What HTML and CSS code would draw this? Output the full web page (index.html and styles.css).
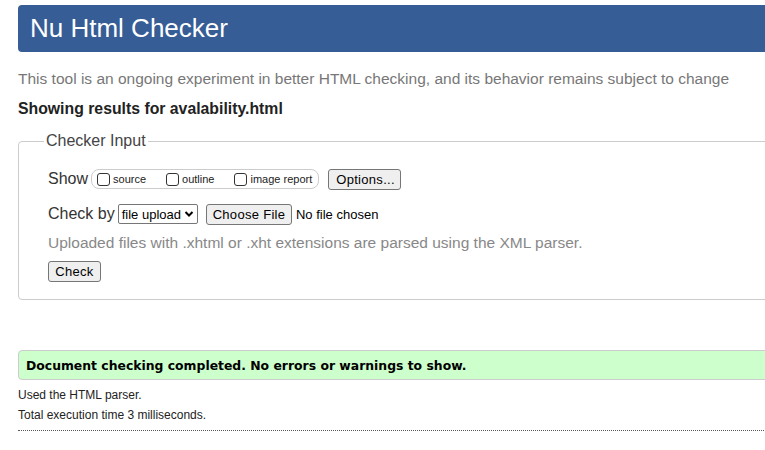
FILE: index.html
```html
<!DOCTYPE html>
<html lang="en">
<head>
<meta charset="utf-8">
<title>Nu Html Checker</title>
<link rel="stylesheet" href="styles.css">
</head>
<body>
<div class="page">
  <h1 class="banner">Nu Html Checker</h1>
  <p class="intro">This tool is an ongoing experiment in better HTML checking, and its behavior remains subject to change</p>
  <p class="results">Showing results for avalability.html</p>
  <fieldset class="input">
    <legend>Checker Input</legend>
    <div class="row">
      <span class="label">Show</span>
      <span class="show-group">
        <label class="opt"><input type="checkbox" class="cb">source</label>
        <label class="opt"><input type="checkbox" class="cb">outline</label>
        <label class="opt last"><input type="checkbox" class="cb">image report</label>
      </span>
      <button class="btn btn-options" type="button">Options...</button>
    </div>
    <div class="row">
      <span class="label">Check by</span>
      <span class="select">file upload
        <svg width="10" height="8" viewBox="0 0 10 8"><path d="M1.5 2 L5 5.5 L8.5 2" fill="none" stroke="#000" stroke-width="2"/></svg>
      </span>
      <button class="btn btn-file" type="button">Choose File</button>
      <span class="nofile">No file chosen</span>
    </div>
    <p class="hint">Uploaded files with .xhtml or .xht extensions are parsed using the XML parser.</p>
    <div class="row">
      <button class="btn btn-check" type="button">Check</button>
    </div>
  </fieldset>
  <div class="success">Document checking completed. No errors or warnings to show.</div>
  <p class="meta first">Used the HTML parser.</p>
  <p class="meta">Total execution time 3 milliseconds.</p>
  <hr class="dots">
</div>
</body>
</html>
```

FILE: styles.css
```css
html, body {
  margin: 0;
  padding: 0;
  background: #fff;
  overflow: hidden;
}
body {
  font-family: "Liberation Sans", Arial, sans-serif;
  color: #222;
}
.page {
  width: 800px;
  padding: 5px 0 0 18px;
}
.banner {
  margin: 0;
  height: 47px;
  display: flex;
  align-items: center;
  padding-left: 12px;
  background: #365d95;
  color: #fff;
  font-weight: normal;
  font-size: 26px;
  border-radius: 4px;
}
.intro {
  margin: 18px 0 0;
  font-size: 15.5px;
  line-height: 18px;
  color: #777;
}
.results {
  margin: 12px 0 0;
  font-size: 15.8px;
  line-height: 18px;
  font-weight: bold;
  color: #222;
}
.input {
  margin: 14px 0 0;
  padding: 18px 0 17px 29px;
  border: 1px solid #ccc;
  border-radius: 4px;
  display: flex;
  flex-direction: column;
  gap: 0;
}
.input legend {
  font-size: 16px;
  line-height: 18px;
  color: #444;
  padding: 0 2px;
  margin-left: -4px;
}
.row {
  display: flex;
  align-items: center;
  height: 22px;
  font-size: 16px;
  color: #333;
}
.row + .row { margin-top: 13px; }
.label {
  margin-right: 3px;
}
.show-group {
  display: flex;
  align-items: center;
  height: 18px;
  border: 1px solid #ccc;
  border-radius: 8px;
  padding: 0 6px 0 5px;
  margin-right: 9px;
}
.opt {
  display: flex;
  align-items: center;
  font-size: 11px;
  color: #222;
  margin-right: 20px;
}
.opt.last { margin-right: 0; }
.cb {
  appearance: none;
  -webkit-appearance: none;
  width: 13px;
  height: 13px;
  margin: 0 3px 0 0;
  border: 1px solid #333;
  border-radius: 3px;
  background: #fff;
}
.btn {
  font-family: "Liberation Sans", Arial, sans-serif;
  font-size: 13px;
  height: 21px;
  padding: 0 7px;
  background: #efefef;
  border: 1px solid #767676;
  border-radius: 3px;
  color: #000;
  letter-spacing: 0.3px;
}
.btn-options { width: 73px; }
.select {
  display: inline-flex;
  align-items: center;
  gap: 3px;
  height: 20px;
  box-sizing: border-box;
  border: 1px solid #767676;
  border-radius: 2px;
  padding: 0 3px 0 3px;
  font-size: 13px;
  color: #000;
  margin-right: 8px;
}
.btn-file { width: 86px; padding: 0; }
.nofile {
  font-size: 13px;
  color: #000;
  margin-left: 4px;
}
.hint {
  margin: 9px 0 0;
  font-size: 15.5px;
  line-height: 18px;
  color: #888;
}
.hint + .row { margin-top: 8px; }
.btn-check { width: 53px; padding: 0; }
.success {
  margin-top: 50px;
  height: 28px;
  display: flex;
  align-items: center;
  padding-left: 7px;
  background: #ccffcc;
  border: 1px solid #ccc;
  border-radius: 4px;
  font-family: "DejaVu Sans", Verdana, sans-serif;
  font-weight: bold;
  font-size: 12.4px;
  color: #000;
}
.meta {
  margin: 0;
  font-size: 12px;
  line-height: 14px;
  color: #222;
}
.meta.first { margin-top: 8px; }
.meta + .meta { margin-top: 6px; }
.dots {
  margin: 8px 0 0;
  border: 0;
  border-top: 1px dotted #555;
  height: 0;
}
```
